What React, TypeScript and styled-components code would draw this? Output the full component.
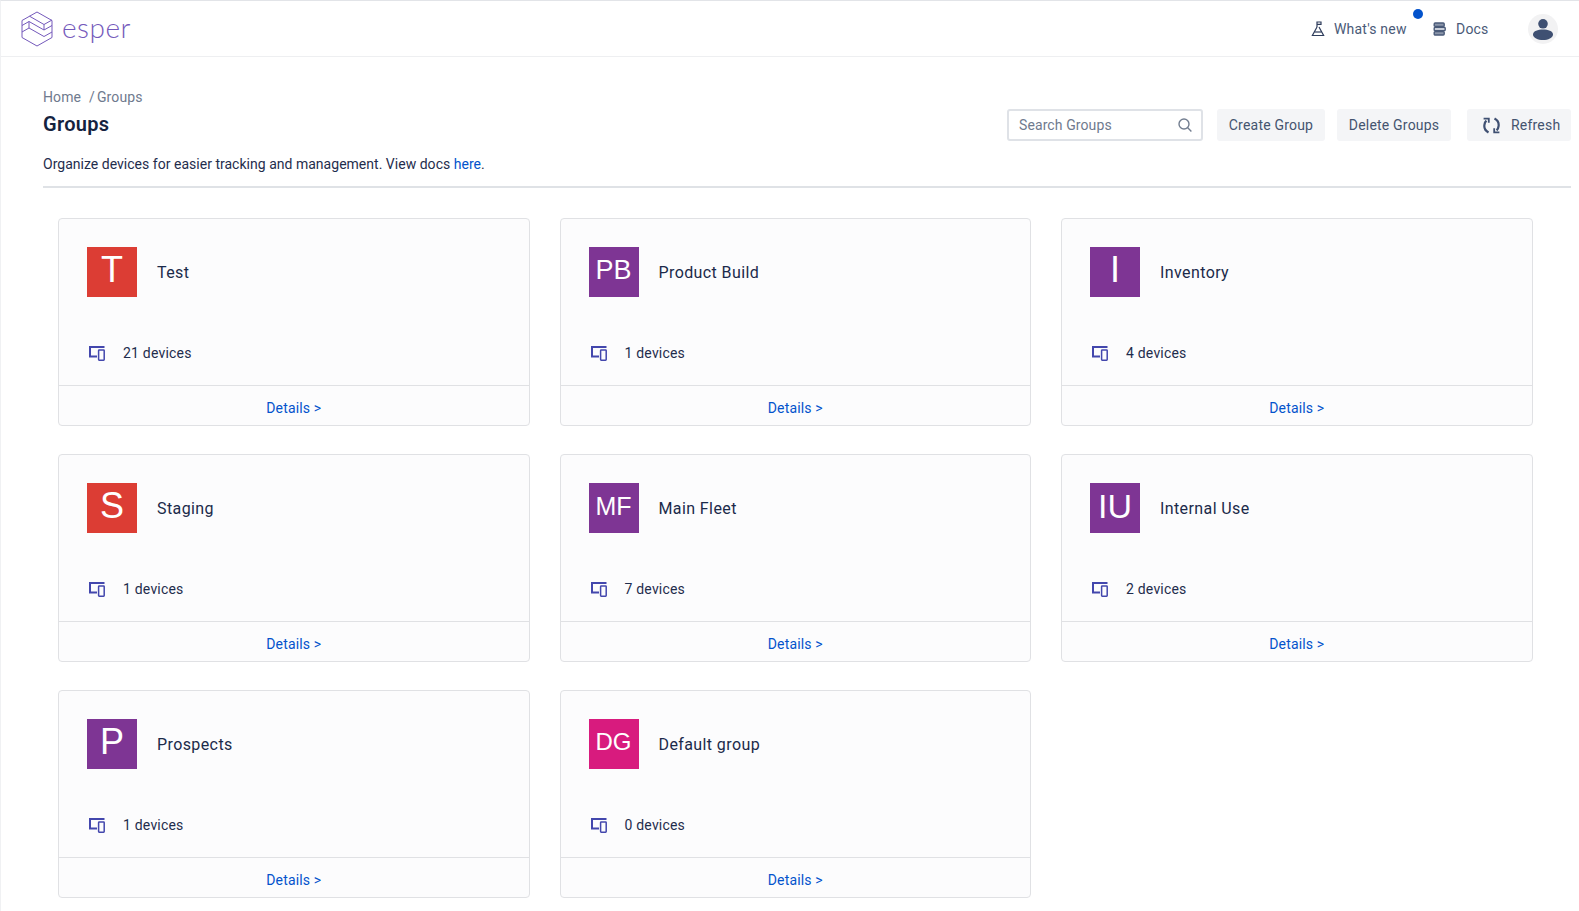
import React from "react";
import styled, { createGlobalStyle } from "styled-components";

const Global = createGlobalStyle`
  html, body { margin: 0; padding: 0; background: #fff; overflow: hidden; height: 100%; }
  body { font-family: "Roboto", "Noto Sans", sans-serif; color: #1b2a4a; }
  * { box-sizing: border-box; }
`;

const Page = styled.div`
  height: 911px;
  border-top: 1px solid #e2e4e8;
  border-left: 1px solid #f0f1f3;
  overflow: hidden;
`;

const TopBar = styled.header`
  height: 56px;
  border-bottom: 1px solid #eeeff1;
  display: flex;
  align-items: center;
  padding: 0 21px 0 20px;
`;

const Brand = styled.div`
  display: flex;
  align-items: center;
  gap: 9px;
`;

const Wordmark = styled.span`
  font-family: "Lato", sans-serif;
  font-weight: 300;
  font-size: 28px;
  letter-spacing: 0.5px;
  line-height: 32px;
  color: #7459bb;
  margin-top: -4px;
`;

const NavLinks = styled.nav`
  margin-left: auto;
  display: flex;
  align-items: center;
`;

const NavLink = styled.div<{ $w: number; $gap: number }>`
  position: relative;
  display: flex;
  align-items: center;
  gap: ${(p) => p.$gap}px;
  width: ${(p) => p.$w}px;
  font-size: 14px;
  color: #4a5a78;
  letter-spacing: 0.2px;
`;

const Dot = styled.span`
  position: absolute;
  top: -12px;
  right: 10px;
  width: 10px;
  height: 10px;
  border-radius: 50%;
  background: #0353cc;
`;

const Avatar = styled.div`
  width: 30px;
  height: 30px;
  display: flex;
`;

const Content = styled.main`
  padding: 31px 8px 0 42px;
`;

const TitleBar = styled.div`
  display: flex;
  justify-content: space-between;
  align-items: flex-start;
`;

const TitleBlock = styled.div`
  display: flex;
  flex-direction: column;
`;

const Crumbs = styled.div`
  font-size: 14px;
  line-height: 18px;
  color: #6f7a8e;
  letter-spacing: 0.1px;
  height: 18px;
`;

const CrumbSep = styled.span`
  margin: 0 2px 0 8px;
`;

const Title = styled.h1`
  margin: 6px 0 0;
  font-size: 20px;
  line-height: 24px;
  font-weight: 600;
  color: #15233f;
  letter-spacing: 0.3px;
`;

const Actions = styled.div`
  display: flex;
  align-items: center;
  gap: 12px;
  margin-top: 21px;
`;

const Search = styled.div`
  width: 196px;
  height: 32px;
  border: 2px solid #dfe2e7;
  border-radius: 3px;
  display: flex;
  align-items: center;
  justify-content: space-between;
  padding: 0 9px 0 10px;
  font-size: 14px;
  color: #6f7a8e;
  letter-spacing: 0.1px;
  margin-right: 2px;
`;

const ActionButton = styled.button<{ $w: number }>`
  width: ${(p) => p.$w}px;
  height: 32px;
  border: 0;
  border-radius: 3px;
  background: #f4f5f7;
  color: #44546f;
  font-family: inherit;
  font-size: 14px;
  letter-spacing: 0.2px;
  display: flex;
  align-items: center;
  justify-content: center;
  padding: 0;
`;

const RefreshButton = styled(ActionButton)`
  margin-left: 4px;
  justify-content: flex-start;
  padding-left: 16px;
  gap: 11px;
`;

const Description = styled.p`
  margin: 14px 0 0;
  font-size: 14px;
  line-height: 18px;
  color: #1f2d4d;
  letter-spacing: 0.02px;
`;

const DocLink = styled.a`
  color: #0353cc;
  text-decoration: none;
`;

const Rule = styled.hr`
  margin: 13px 0 0;
  border: 0;
  height: 2px;
  background: #dfe2e6;
`;

const Grid = styled.section`
  margin: 30px 0 0 15px;
  display: grid;
  grid-template-columns: repeat(3, 471.5px);
  column-gap: 30px;
  row-gap: 28px;
`;

const Card = styled.article`
  height: 208px;
  border: 1px solid #e0e1e4;
  border-radius: 4px;
  background: #fcfcfd;
  display: flex;
  flex-direction: column;
`;

const CardBody = styled.div`
  flex: 1;
  padding: 28px 28px 0;
  display: flex;
  flex-direction: column;
`;

const CardHead = styled.div`
  display: flex;
  align-items: center;
  gap: 20px;
`;

const Badge = styled.div<{ $color: string; $size: number }>`
  width: 50px;
  height: 50px;
  background: ${(p) => p.$color};
  color: #fff;
  font-family: "Liberation Sans", Arial, sans-serif;
  font-size: ${(p) => p.$size}px;
  line-height: 46px;
  text-align: center;
  flex: none;
`;

const CardName = styled.div`
  font-size: 16px;
  line-height: 20px;
  color: #1b2a4a;
  letter-spacing: 0.4px;
  margin-top: 2px;
`;

const DeviceRow = styled.div`
  margin-top: 47px;
  display: flex;
  align-items: center;
  gap: 18px;
  padding-left: 2px;
  font-size: 14px;
  line-height: 18px;
  color: #1f2d4d;
  letter-spacing: 0.2px;
`;

const CardFoot = styled.div`
  height: 40px;
  border-top: 1px solid #e0e1e4;
  display: flex;
  align-items: center;
  justify-content: center;
  padding-top: 5px;
  font-size: 14px;
  color: #0353cc;
  letter-spacing: 0.15px;
`;

const Svg = styled.svg`
  display: block;
  flex: none;
`;

const Logo = () => (
  <Svg width="32" height="36" viewBox="0 0 32 36" fill="none" stroke="#7459bb" strokeWidth="1" strokeLinejoin="round">
    <path d="M16 1 L31 9.5 V26.5 L16 35 L1 26.5 V9.5 Z" />
    <path d="M8.5 5.2 L23 13.5 L31 9" />
    <path d="M1 14.5 L8 10.5 L23 19 L31 14.5" />
    <path d="M23 13.5 V19" />
    <path d="M1 21 L8 17 L23 25.5 L31 21" />
    <path d="M8 10.5 V17" />
  </Svg>
);

const FlaskIcon = () => (
  <Svg width="14" height="16" viewBox="0 0 14 16" fill="none" stroke="#2f3d5c" strokeWidth="1.2">
    <path d="M6 6 V1 H10 V3.4 H6" />
    <path d="M6 6 L1.4 14.5 H12.6 L8 6" />
    <path d="M3.5 11 H10.5" />
  </Svg>
);

const DocsIcon = () => (
  <Svg width="13" height="14" viewBox="0 0 13 14" fill="none" stroke="#4a5a78" strokeWidth="1.4">
    <rect x="1.2" y="1" width="10" height="3.4" rx="1" fill="#8b96aa" />
    <rect x="1.2" y="5.3" width="11" height="3.4" rx="1" fill="#c9ced8" />
    <rect x="1.2" y="9.6" width="10" height="3.4" rx="1" fill="#8b96aa" />
  </Svg>
);

const UserIcon = () => (
  <Svg width="30" height="30" viewBox="0 0 30 30">
    <circle cx="15" cy="15" r="15" fill="#f2f2f3" />
    <circle cx="15" cy="9.8" r="4.8" fill="#3f5072" />
    <path d="M5 20.5 C5 17 10 15.6 15 15.6 C20 15.6 25 17 25 20.5 C25 24 20 26 15 26 C10 26 5 24 5 20.5 Z" fill="#3f5072" />
  </Svg>
);

const SearchIcon = () => (
  <Svg width="14" height="14" viewBox="0 0 14 14" fill="none" stroke="#737e90" strokeWidth="1.4">
    <circle cx="6" cy="6" r="5" />
    <path d="M9.5 9.5 L13.4 13.4" />
  </Svg>
);

const RefreshIcon = () => (
  <Svg width="17" height="17" viewBox="0 0 17 17" fill="none" stroke="#3f5072" strokeWidth="2.2">
    <path d="M5.5 15.5 C2.4 13.8 1 11 1.4 8 C1.6 6.2 2.2 4.6 3.4 3.6" />
    <path d="M11.5 1.5 C14.6 3.2 16 6 15.6 9 C15.4 10.8 14.8 12.4 13.6 13.4" />
    <path d="M0.6 1.6 H5.8 V5.8" strokeWidth="1.8" />
    <path d="M16.4 15.4 H11.2 V11.2" strokeWidth="1.8" />
  </Svg>
);

const DevicesIcon = () => (
  <Svg width="16" height="15" viewBox="0 0 16 15" fill="none" stroke="#4347ad">
    <path d="M8 10.5 H1 V1 H15.5" strokeWidth="2" />
    <rect x="9.6" y="4" width="5.6" height="10.2" strokeWidth="1.5" rx="0.6" />
  </Svg>
);

const groups = [
  { initials: "T", name: "Test", count: 21, color: "#dc3d34", size: 36 },
  { initials: "PB", name: "Product Build", count: 1, color: "#7e3594", size: 27 },
  { initials: "I", name: "Inventory", count: 4, color: "#7e3594", size: 36 },
  { initials: "S", name: "Staging", count: 1, color: "#dc3d34", size: 36 },
  { initials: "MF", name: "Main Fleet", count: 7, color: "#7e3594", size: 25 },
  { initials: "IU", name: "Internal Use", count: 2, color: "#7e3594", size: 34 },
  { initials: "P", name: "Prospects", count: 1, color: "#7e3594", size: 36 },
  { initials: "DG", name: "Default group", count: 0, color: "#d81b7e", size: 24 },
];

export default function App() {
  return (
    <>
      <Global />
      <Page>
        <TopBar>
          <Brand>
            <Logo />
            <Wordmark>esper</Wordmark>
          </Brand>
          <NavLinks>
            <NavLink $w={122} $gap={9}>
              <FlaskIcon />
              What's new
              <Dot />
            </NavLink>
            <NavLink $w={95} $gap={10}>
              <DocsIcon />
              Docs
            </NavLink>
            <Avatar>
              <UserIcon />
            </Avatar>
          </NavLinks>
        </TopBar>
        <Content>
          <TitleBar>
            <TitleBlock>
              <Crumbs>
                Home<CrumbSep>/</CrumbSep>Groups
              </Crumbs>
              <Title>Groups</Title>
            </TitleBlock>
            <Actions>
              <Search>
                Search Groups
                <SearchIcon />
              </Search>
              <ActionButton $w={108}>Create Group</ActionButton>
              <ActionButton $w={114}>Delete Groups</ActionButton>
              <RefreshButton $w={104}>
                <RefreshIcon />
                Refresh
              </RefreshButton>
            </Actions>
          </TitleBar>
          <Description>
            Organize devices for easier tracking and management. View docs <DocLink>here</DocLink>.
          </Description>
          <Rule />
          <Grid>
            {groups.map((g) => (
              <Card key={g.name}>
                <CardBody>
                  <CardHead>
                    <Badge $color={g.color} $size={g.size}>{g.initials}</Badge>
                    <CardName>{g.name}</CardName>
                  </CardHead>
                  <DeviceRow>
                    <DevicesIcon />
                    {g.count} devices
                  </DeviceRow>
                </CardBody>
                <CardFoot>Details &gt;</CardFoot>
              </Card>
            ))}
          </Grid>
        </Content>
      </Page>
    </>
  );
}
